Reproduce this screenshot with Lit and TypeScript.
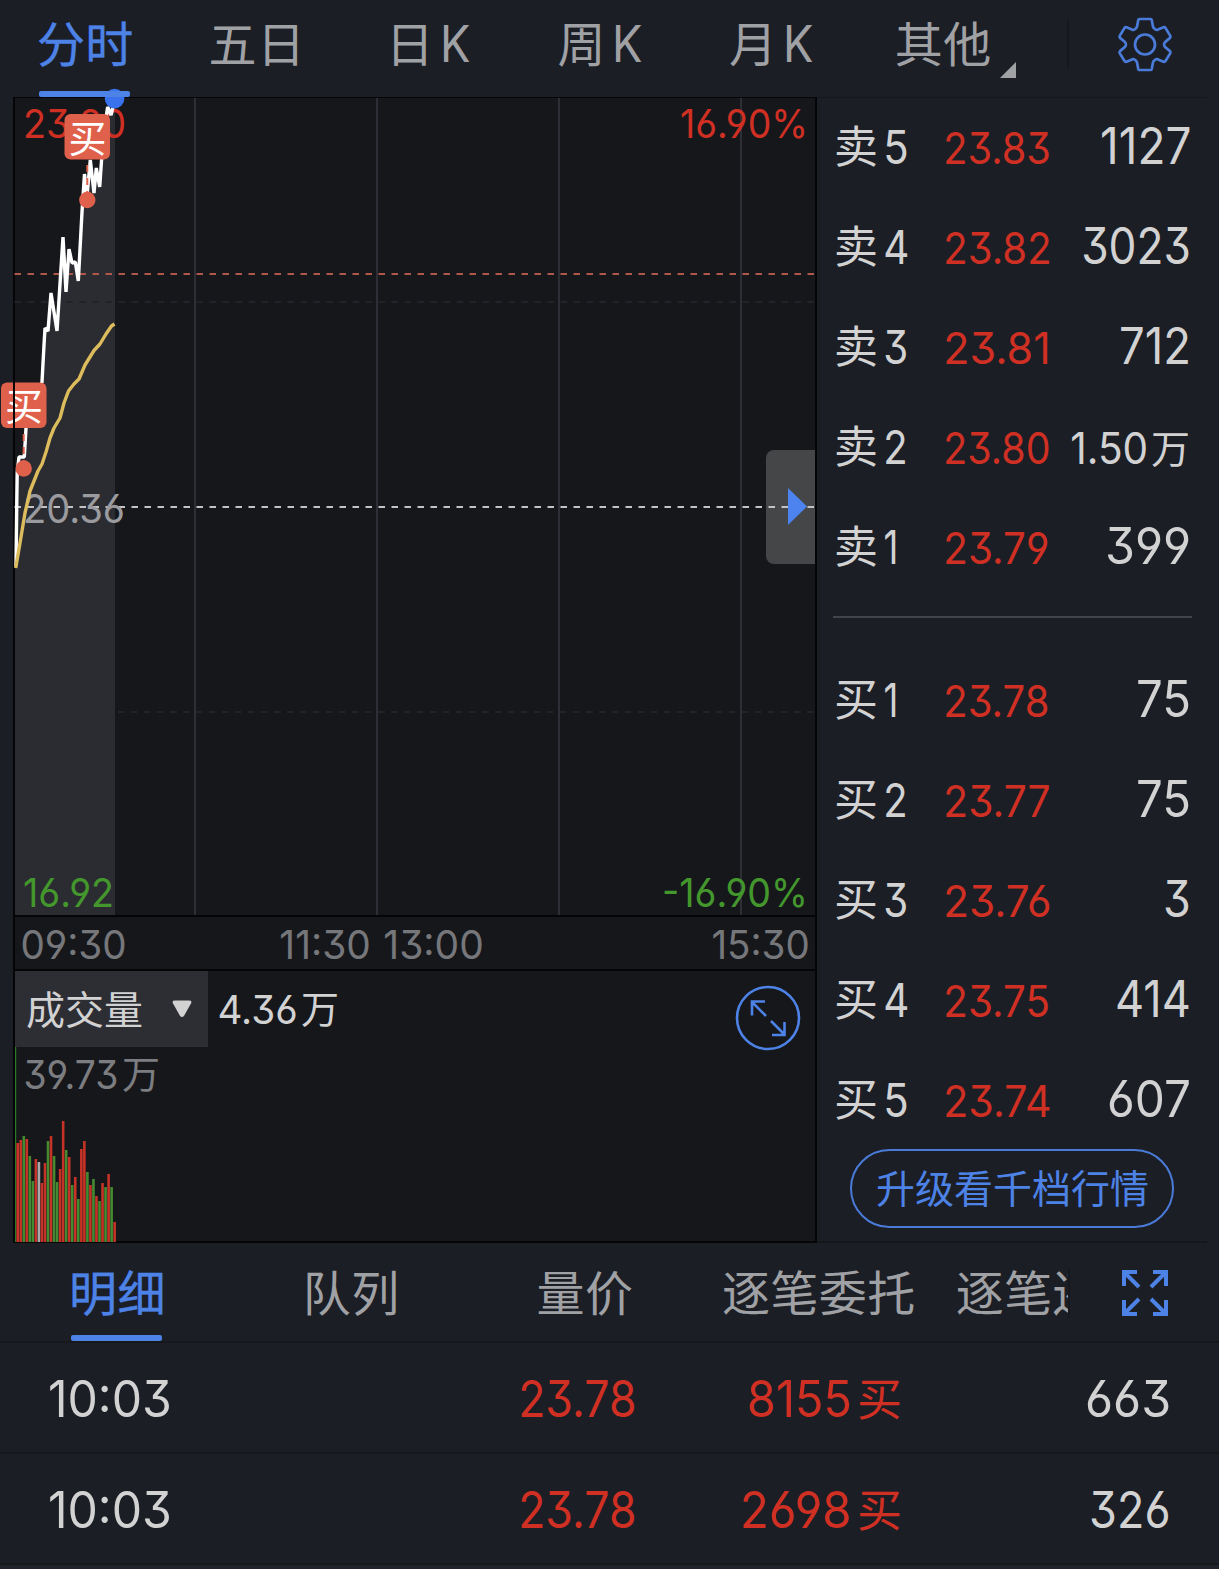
import { LitElement, html, svg, css } from "lit";
import { customElement, property } from "lit/decorators.js";

/** Numeric text condensed horizontally so that its ink fills a given width. */
@customElement("fit-text")
class FitText extends LitElement {
  @property() text = "";
  @property({ type: Number }) w = 100;

  static styles = css`
    :host {
      display: inline-block;
      flex: none;
      line-height: 1;
      white-space: nowrap;
      font-family: Inter, "Liberation Sans", sans-serif;
      font-feature-settings: "cv03", "cv04", "cv09";
    }
    .ink {
      display: inline-block;
      transform-origin: 0 50%;
    }
  `;

  render() {
    return html`<span class="ink">${this.text}</span>`;
  }

  updated() {
    const ink = this.renderRoot.querySelector(".ink") as HTMLElement;
    const size = parseFloat(getComputedStyle(this).fontSize);
    const bearing = size * 0.042;
    const k = this.w / (ink.offsetWidth - bearing * 2);
    this.style.width = `${this.w}px`;
    ink.style.transform = `translateX(${-bearing * k}px) scaleX(${k})`;
  }
}

const n = (text: string, w: number, cls = "") =>
  html`<fit-text class=${cls} .text=${text} .w=${w}></fit-text>`;

interface Level {
  side: string;
  no: string;
  noW: number;
  price: string;
  priceX: number;
  priceW: number;
  qty: string;
  qtyW: number;
  unit?: string;
}

const level = (side: string, no: string, noW: number, price: string, priceX: number, priceW: number, qty: string, qtyW: number, unit?: string): Level => ({
  side, no, noW, price, priceX, priceW, qty, qtyW, unit,
});

const ASKS = [
  level("卖", "5", 22, "23.83", 1, 104, "1127", 87),
  level("卖", "4", 23, "23.82", 0, 105, "3023", 106),
  level("卖", "3", 22, "23.81", 0, 104, "712", 68),
  level("卖", "2", 21, "23.80", 0, 104, "1.50", 74, "万"),
  level("卖", "1", 12, "23.79", 1, 103, "399", 82),
];
const BIDS = [
  level("买", "1", 12, "23.78", 1, 103, "75", 51),
  level("买", "2", 21, "23.77", -1, 104, "75", 51),
  level("买", "3", 22, "23.76", 0, 105, "3", 24),
  level("买", "4", 23, "23.75", 1, 103, "414", 72),
  level("买", "5", 22, "23.74", 0, 105, "607", 80),
];

// Bar tops of the volume plot, 3px apart: r = up, g = down, w = flat.
const BARS = "r1143 r1140 g1136 r1139 g1156 g1181 r1159 w1162 r1183 r1163 g1141 r1136 g1156 g1182 r1169 r1121 g1150 r1157 g1185 r1177 g1199 r1149 r1141 g1172 r1185 g1179 r1196 g1201 r1183 g1187 r1174 g1187 r1222"
  .split(" ")
  .map((s) => ({ tone: s[0], top: Number(s.slice(1)) - 1047 }));

const PRICE =
  "16,566 16.8,500 17.2,473 19,457 24.3,457 26,428 33,405 42,382 44,345 45,328 48,331 51,293 57,331 63,237 66,292 69,249 72,263 75.3,262 78.3,281 82,212 84.5,174 87,196 90.3,160 94,193 96.3,168 99.7,187 101.7,158 104,130 107.7,107 111,115 114,103";
const AVERAGE =
  "15.7,568 20,543 25,513 30,491 38,471 42,464 46,452 50,438 54,428 60,418 64,403 68.5,391 74,384 79,379 85,365 94,350.5 100,344 106,334 111.5,326 114.5,324";

@customElement("intraday-plot")
class IntradayPlot extends LitElement {
  static styles = css`
    :host { display: block; height: 817px; }
    svg { display: block; overflow: visible; }
    text {
      font-family: Inter, "Liberation Sans", sans-serif;
      font-feature-settings: "cv03", "cv04", "cv09";
      font-size: 40px;
    }
    .tag-text {
      font-family: "Noto Sans CJK SC", sans-serif;
      font-size: 38px;
      fill: #fff;
    }
    .up { fill: #cf3023; }
    .down { fill: #43972d; }
    .mid { fill: #9b9b9f; }
    .grid { stroke: #34353e; stroke-width: 1.6; }
    .dash { stroke-width: 2; stroke-dasharray: 6.5 6.5; }
  `;

  tag(x: number, y: number) {
    return svg`
      <rect x=${x} y=${y} width="45.5" height="45.5" rx="6" fill="#df614c"></rect>
      <text class="tag-text" x=${x + 4} y=${y + 37.5}>买</text>`;
  }

  label(cls: string, text: string, x: number, y: number, w: number) {
    return svg`<text class=${cls} x=${x - 2} y=${y} textLength=${w + 3} lengthAdjust="spacingAndGlyphs">${text}</text>`;
  }

  render() {
    return html`<svg width="800" height="817" viewBox="15 98 800 817">
      <polygon points="${PRICE} 115,103 115,915 15,915 15,566" fill="#2b2c31"></polygon>
      ${[195, 377, 559, 741].map((x) => svg`<line class="grid" x1=${x} x2=${x} y1="98" y2="915"></line>`)}
      <line class="dash" x1="14.5" x2="815" y1="302" y2="302" stroke="#212329"></line>
      <line class="dash" x1="118" x2="815" y1="712" y2="712" stroke="#212329"></line>
      <line class="dash" x1="14.5" x2="815" y1="274" y2="274" stroke="#b0574c"></line>
      <path d="M815 450h-41a8 8 0 0 0-8 8v98a8 8 0 0 0 8 8h41z" fill="#454648"></path>
      <line class="dash" x1="14.5" x2="815" y1="507" y2="507" stroke="#c3c3c5"></line>
      <path d="M788 488v37l19-18.500z" fill="#4c83ee"></path>
      ${this.label("up", "23.80", 25, 137.500, 100)}
      ${this.label("up", "16.90%", 682, 137.500, 125)}
      ${this.label("mid", "20.36", 25, 523, 99)}
      ${this.label("down", "16.92", 25, 906.500, 88)}
      ${this.label("down", "-16.90%", 664, 906.500, 143)}
      <polyline points=${PRICE} fill="none" stroke="#fff" stroke-width="3.400" stroke-linejoin="bevel"></polyline>
      <polyline points=${AVERAGE} fill="none" stroke="#dcbc5c" stroke-width="3.400" stroke-linejoin="round"></polyline>
      <path d="M87.300 159v35M23.700 428v36" stroke="#df614c" stroke-width="2" stroke-dasharray="7 6" stroke-dashoffset="-6"></path>
      <circle cx="87.3" cy="200" r="8.200" fill="#df614c"></circle>
      <circle cx="23.7" cy="468.5" r="8.200" fill="#df614c"></circle>
      ${this.tag(64.500, 114)}
      ${this.tag(1, 382.500)}
      <line x1="14" x2="14" y1="380" y2="430" stroke="#050507" stroke-width="2"></line>
      <circle cx="114.600" cy="98.600" r="9.800" fill="#3a71ec"></circle>
    </svg>`;
  }
}

@customElement("volume-plot")
class VolumePlot extends LitElement {
  static styles = css`
    :host { display: block; height: 195px; }
    svg { display: block; }
    .r { fill: #c43326; }
    .g { fill: #438a30; }
    .w { fill: #a9a9ab; }
  `;
  render() {
    return html`<svg width="300" height="195">
      <rect width="1.2" height="195" fill="#2f7a26"></rect>
      ${BARS.map((b, i) => svg`<rect class=${b.tone} x=${1.4 + i * 3.03} y=${b.top} width="2.6" height=${195 - b.top}></rect>`)}
    </svg>`;
  }
}

@customElement("app-root")
class AppRoot extends LitElement {
  static styles = css`
    :host {
      display: block;
      width: 1219px;
      height: 1569px;
      overflow: hidden;
      background: #1b1e25;
      color: #d2d2d3;
      font-family: "Noto Sans CJK SC", sans-serif;
      line-height: 1;
    }
    svg { display: block; flex: none; }
    .cjk { font-family: "Noto Sans CJK SC", sans-serif; flex: none; line-height: 1; }
    .s40 { font-size: 40px; }
    .s44 { font-size: 44px; }
    .s46 { font-size: 46px; }
    .s50 { font-size: 50px; }
    .red { color: #cf3023; }
    .line { display: flex; align-items: baseline; }
    .line::before {
      content: "\\200b";
      width: 0;
      font: 50px/1 Inter, "Liberation Sans", sans-serif;
    }
    .line .cjk { transform: translateY(-1px); }

    .periods { display: flex; height: 97px; }
    .period-list {
      display: grid;
      grid-template-columns: repeat(6, 171.6px);
      width: 1069px;
      color: #a0a1a4;
    }
    .period {
      display: flex;
      justify-content: center;
      position: relative;
      padding-top: 17px;
      font-size: 48px;
    }
    .period .cjk, .tab .cjk { letter-spacing: 0.4px; margin-left: -1px; }
    .period .k { font-size: 50px; margin: 2px 2px 0 8px; }
    .on { color: #4d82e6; }
    .on .cjk { -webkit-text-stroke: 0.4px currentColor; }
    .on::after {
      content: "";
      position: absolute;
      left: 50%;
      bottom: 0;
      width: 91px;
      height: 6px;
      margin-left: -46px;
      border-radius: 2px;
      background: currentColor;
    }
    .period.on::after { margin-left: -47px; }
    .corner { position: absolute; left: 142px; top: 62px; }
    .gear { display: flex; width: 150px; padding: 16px 0 0 48px; box-sizing: border-box; }
    .sep { width: 2px; height: 49px; margin-top: 20px; background: #16181d; }

    .main {
      display: grid;
      grid-template-columns: 804px 1fr;
      width: 1194px;
      height: 1146px;
      margin-left: 13px;
      box-sizing: border-box;
      border-bottom: 2px solid #15171b;
      border-top: 1px solid #15171b;
    }
    .charts {
      box-sizing: border-box;
      height: 1146px;
      margin-top: -1px;
      border: 2px solid #050507;
      border-top-width: 1px;
      background: #16171b;
    }
    .axis {
      height: 56px;
      box-sizing: border-box;
      border-top: 2px solid #050507;
      border-bottom: 2px solid #050507;
      padding: 0 7px;
      color: #76777b;
    }
    .axis .line { margin-top: -1px; }
    .t2 { margin-left: 156px; }
    .t3 { margin-left: 16px; }
    .t4 { margin-left: auto; }
    .vol-head { display: flex; height: 76px; }
    .vol-pick {
      display: flex;
      align-items: center;
      width: 193px;
      box-sizing: border-box;
      padding-left: 11px;
      gap: 28px;
      background: #2d2e33;
      font-size: 39px;
    }
    .vol-pick .cjk { padding-bottom: 4px; }
    .vol-value { flex: 1; padding: 9.500px 0 0 11px; }
    .vol-zoom { padding: 14px 14px 0 0; height: 66px; }
    .unit { font-size: 38px; margin-left: 5px; }
    .vol-body { display: grid; }
    .vol-body > * { grid-area: 1 / 1; }
    .vol-max { padding: 0 0 0 10px; margin-top: -1.500px; color: #7c7d81; }

    .book { padding-left: 16px; width: 359px; }
    .level { height: 77.200px; padding-top: 22.800px; }
    .level .side { font-size: 44px; width: 51px; margin-left: 1px; }
    .level .no { width: 60px; }
    .level .price { width: 111px; }
    .level .qty { flex: 1; display: flex; justify-content: flex-end; align-items: baseline; padding-right: 3px; margin-left: -20px; }
    .level .unit { font-size: 39px; margin-right: -1px; }
    .rule { height: 2px; background: #41444b; margin: 18px 0 33px; }
    .upgrade {
      display: flex;
      justify-content: center;
      width: 324px;
      height: 79px;
      box-sizing: border-box;
      margin: -2px 0 0 17px;
      padding: 16px 0 0 1px;
      border: 2px solid #4a7bd8;
      border-radius: 40px;
      color: #4d82e6;
      font-size: 39px;
    }

    .tabs { display: flex; height: 100px; position: relative; border-bottom: 2px solid #16181c; box-sizing: border-box; }
    .tab-list {
      display: grid;
      grid-template-columns: repeat(5, 233.800px);
      width: 1068px;
      overflow: hidden;
      color: #a0a1a4;
    }
    .tab { display: flex; justify-content: center; position: relative; padding: 23px 0 0 2px; font-size: 48px; }
    .tab.on::after { margin-left: -46px; }
    .tabs .sep { margin-top: 26px; }
    .expand { padding: 26px 0 0 51px; }

    .trade { height: 109px; border-bottom: 2px solid #16181c; padding: 0 50px; }
    .trade .line { padding-top: 26.500px; height: 50px; }
    .trade .price { margin-left: 350px; }
    .trade .mid { width: 267px; display: flex; justify-content: flex-end; align-items: baseline; }
    .trade .mid .cjk { font-size: 45px; margin-left: 7px; }
    .trade .last { margin-left: auto; }
    .foot { height: 8px; background: #20222c; }
  `;

  row(l: Level) {
    return html`<div class="level line">
      <span class="cjk side">${l.side}</span>
      <span class="no s46">${n(l.no, l.noW)}</span>
      <span class="price s44 red">${n(l.price, l.priceW)}</span>
      <span class="qty">${n(l.qty, l.qtyW, l.unit ? "s44" : "s50")}${l.unit ? html`<span class="cjk unit">${l.unit}</span>` : ""}</span>
    </div>`;
  }

  trade(amount: string, amountW: number, last: string, lastW: number) {
    return html`<div class="trade">
      <div class="line s50">
        ${n("10:03", 120)}
        <span class="price red">${n("23.78", 115)}</span>
        <span class="mid red">${n(amount, amountW)}<span class="cjk">买</span></span>
        <span class="last">${n(last, lastW)}</span>
      </div>
    </div>`;
  }

  render() {
    return html`
      <div class="periods">
        <div class="period-list">
          <div class="period on"><span class="cjk">分时</span></div>
          <div class="period"><span class="cjk">五日</span></div>
          ${["日", "周", "月"].map((c) => html`<div class="period"><span class="cjk">${c}</span>${n("K", 27, "k")}</div>`)}
          <div class="period">
            <span class="cjk">其他</span>
            <svg class="corner" width="16" height="16"><path d="M16 0v16H0z" fill="#a0a1a4"></path></svg>
          </div>
        </div>
        <div class="sep"></div>
        <div class="gear">
          <svg width="56" height="57" viewBox="-28 -28.500 56 57" fill="none" stroke="#4a7bd8" stroke-width="2.700" stroke-linejoin="round">
            <path d="M-5.500 -25.500H5.500Q6.500 -25.500 6.800 -24.300L8 -17.800Q8.500 -16 10.200 -15.200Q11.500 -14.400 13 -14.900L18.500 -17.200Q19.800 -17.600 20.500 -16.500L25.300 -8.600Q25.900 -7.500 25 -6.600L20.600 -2.900Q19 -1.500 19 0Q19 1.500 20.600 2.900L25 6.600Q25.900 7.500 25.300 8.600L20.500 16.500Q19.800 17.600 18.500 17.200L13 14.900Q11.500 14.400 10.200 15.200Q8.500 16 8 17.800L6.800 24.300Q6.500 25.500 5.500 25.500H-5.500Q-6.500 25.500 -6.800 24.300L-8 17.800Q-8.500 16 -10.200 15.200Q-11.500 14.400 -13 14.900L-18.500 17.200Q-19.800 17.600 -20.500 16.500L-25.300 8.600Q-25.900 7.500 -25 6.600L-20.600 2.900Q-19 1.500 -19 0Q-19 -1.500 -20.600 -2.900L-25 -6.600Q-25.900 -7.500 -25.300 -8.600L-20.500 -16.500Q-19.800 -17.600 -18.500 -17.200L-13 -14.900Q-11.500 -14.400 -10.200 -15.200Q-8.500 -16 -8 -17.800L-6.800 -24.300Q-6.500 -25.500 -5.500 -25.500Z"></path>
            <circle r="10"></circle>
          </svg>
        </div>
      </div>

      <div class="main">
        <div class="charts">
          <intraday-plot></intraday-plot>
          <div class="axis">
            <div class="line s40">
              ${n("09:30", 103)}${n("11:30", 88, "t2")}${n("13:00", 97, "t3")}${n("15:30", 95, "t4")}
            </div>
          </div>
          <div class="vol-head">
            <div class="vol-pick">
              <span class="cjk">成交量</span>
              <svg width="22" height="20"><path d="M4 1.500H18Q21.500 1.500 20 4.500L13.200 16.500Q11 19.500 8.800 16.500L2 4.500Q0.500 1.500 4 1.500Z" fill="#d2d2d3"></path></svg>
            </div>
            <div class="vol-value line s40">${n("4.36", 77)}<span class="cjk unit">万</span></div>
            <div class="vol-zoom">
              <svg width="66" height="66" viewBox="-33 -33 66 66" fill="none" stroke="#4d82e6" stroke-width="2.600">
                <circle r="31"></circle>
                <path d="M-2 -2L-16 -16M-16 -2.500V-16.500H-3M3 3L16.500 16.500M16.500 4V17H4"></path>
              </svg>
            </div>
          </div>
          <div class="vol-body">
            <volume-plot></volume-plot>
            <div class="vol-max line s40">${n("39.73", 92)}<span class="cjk unit">万</span></div>
          </div>
        </div>
        <div class="book">
          ${ASKS.map((l) => this.row(l))}
          <div class="rule"></div>
          ${BIDS.map((l) => this.row(l))}
          <div class="upgrade"><span class="cjk">升级看千档行情</span></div>
        </div>
      </div>

      <div class="tabs">
        <div class="tab-list">
          <div class="tab on"><span class="cjk">明细</span></div>
          <div class="tab"><span class="cjk">队列</span></div>
          <div class="tab"><span class="cjk">量价</span></div>
          <div class="tab"><span class="cjk">逐笔委托</span></div>
          <div class="tab"><span class="cjk">逐笔还原</span></div>
        </div>
        <div class="sep"></div>
        <div class="expand">
          <svg width="48" height="48" fill="none" stroke="#4d82e6" stroke-width="4">
            <path d="M3 17V3H16M3 3L18 18M32 3H45V17M45 3L30 18M3 31V45H16M3 45L18 30M32 45H45V31M45 45L30 30"></path>
          </svg>
        </div>
      </div>

      ${this.trade("8155", 101, "663", 82)}
      ${this.trade("2698", 108, "326", 78)}
      <div class="foot"></div>
    `;
  }
}
